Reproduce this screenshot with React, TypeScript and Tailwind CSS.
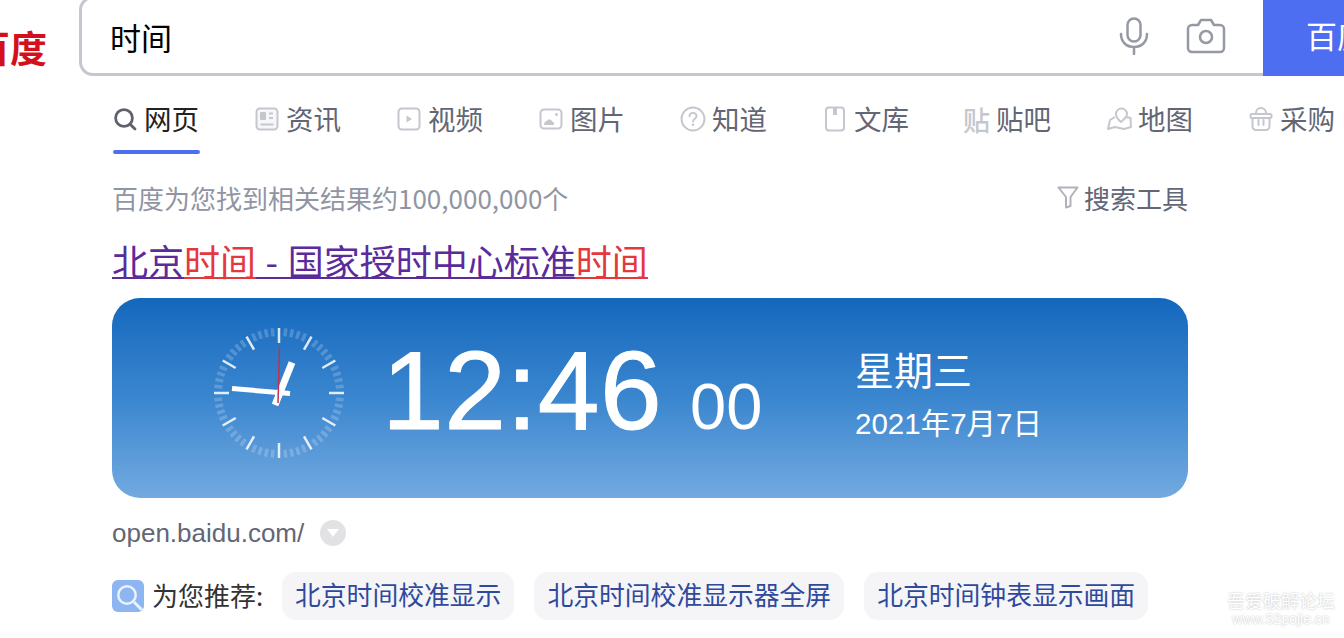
const cjk = "font-['Noto_Sans_CJK_SC','Noto_Sans',sans-serif]";

function IconSearch() {
  return (
    <svg width="24" height="24" viewBox="0 0 24 24" fill="none" stroke="#5f626d" strokeWidth="2.8" strokeLinecap="round">
      <circle cx="11" cy="11" r="8.4" />
      <path d="M17.4 17.4 22 22" />
    </svg>
  );
}

function IconNews() {
  return (
    <svg width="24" height="24" viewBox="0 0 24 24" fill="none" stroke="#c4c7ce" strokeWidth="2">
      <rect x="1.500" y="1.500" width="21" height="21" rx="3.500" fill="#f7f7f9" />
      <rect x="5" y="5" width="6" height="8" rx="1" fill="#c4c7ce" stroke="none" />
      <path d="M14 6.500h4M14 11h4M5.500 17.500h13" />
    </svg>
  );
}

function IconVideo() {
  return (
    <svg width="24" height="24" viewBox="0 0 24 24" fill="none" stroke="#c4c7ce" strokeWidth="2">
      <rect x="1.500" y="1.500" width="21" height="21" rx="3.500" />
      <path d="M9.500 8.500v7l5.500-3.500z" fill="#c4c7ce" stroke="none" />
    </svg>
  );
}

function IconImage() {
  return (
    <svg width="24" height="24" viewBox="0 0 24 24" fill="none" stroke="#c4c7ce" strokeWidth="2">
      <rect x="1.500" y="2.500" width="21" height="19" rx="3.500" />
      <path d="M5 18c0-2.500 1.500-4 3-4 .8-2 4.500-2 5 .5 1.600 0 2.500 1.700 2 3.500z" fill="#c4c7ce" stroke="none" />
      <circle cx="17.500" cy="7.500" r="1.500" fill="#c4c7ce" stroke="none" />
    </svg>
  );
}

function IconAsk() {
  return (
    <svg width="26" height="26" viewBox="0 0 24 24" fill="none" stroke="#c4c7ce" strokeWidth="1.800" strokeLinecap="round" className="-ml-[1px]">
      <circle cx="12" cy="12" r="10.600" />
      <path d="M8.800 9.500c0-4.200 6.500-4.200 6.500-.2 0 2.400-3.300 2.500-3.300 4.900" />
      <circle cx="12" cy="17.300" r="1.200" fill="#c4c7ce" stroke="none" />
    </svg>
  );
}

function IconDoc() {
  return (
    <svg width="24" height="26" viewBox="0 0 24 26" fill="none" stroke="#c4c7ce" strokeWidth="2">
      <rect x="3" y="1.500" width="18" height="23" rx="3" />
      <path d="M10 2v7h4V2z" fill="#c4c7ce" stroke="none" />
    </svg>
  );
}

function IconMap() {
  return (
    <svg width="26" height="24" viewBox="0 0 26 24" fill="none" stroke="#c4c7ce" strokeWidth="2" strokeLinejoin="round">
      <path d="M8 10 3 13l-2 9 7-2 9 2 7-2-.5-9-4.500-1" />
      <path d="M14 15c-3-2.500-5-5-5-8a5.500 5.500 0 0 1 11 0c0 3-3 5.500-6 8z" fill="#fff" />
    </svg>
  );
}

function IconBag() {
  return (
    <svg width="24" height="26" viewBox="0 0 24 26" fill="none" stroke="#c4c7ce" strokeWidth="2" strokeLinecap="round">
      <path d="M7 8V7a5 5 0 0 1 10 0v1" />
      <rect x="1.500" y="8" width="21" height="4" rx="1.500" />
      <path d="M3.500 12v8.500a3.500 3.500 0 0 0 3.500 3.500h10a3.500 3.500 0 0 0 3.500-3.500V12M9.500 14v5M14.500 14v5" />
    </svg>
  );
}

const tabs = [
  { label: "网页", icon: <IconSearch /> },
  { label: "资讯", icon: <IconNews /> },
  { label: "视频", icon: <IconVideo /> },
  { label: "图片", icon: <IconImage /> },
  { label: "知道", icon: <IconAsk /> },
  { label: "文库", icon: <IconDoc /> },
  { label: "贴吧", icon: <span className="-ml-[2px] text-[27px] leading-none font-medium text-[#c4c7ce]">贴</span> },
  { label: "地图", icon: <IconMap /> },
  { label: "采购", icon: <IconBag /> },
];

const ticks = Array.from({ length: 60 }, (_, i) => i);

function Clock() {
  return (
    <svg width="132" height="132" viewBox="0 0 132 132" className="mb-[10px] shrink-0">
      {ticks.map((i) => {
        const major = i % 5 === 0;
        return (
          <line
            key={i}
            x1="66"
            y1="1"
            x2="66"
            y2={major ? 16 : 9}
            stroke="#fff"
            strokeOpacity={major ? 0.85 : 0.2}
            strokeWidth={major ? 2.500 : 3.500}
            transform={`rotate(${i * 6} 66 66)`}
          />
        );
      })}
      <path d="M19 61.500 L77 66.500" stroke="#fff" strokeWidth="5" />
      <path d="M79 35.500 L62 78" stroke="#fff" strokeWidth="7" />
      <path d="M66.500 20 L65 76" stroke="#c2314a" strokeWidth="1.500" />
    </svg>
  );
}

export default function App() {
  return (
    <div className={`relative h-[638px] w-[1344px] overflow-hidden bg-white ${cjk}`}>
      {/* Header */}
      <div className="flex h-[76px] items-end">
        <div className="flex h-[76px] w-[47px] shrink-0 justify-end overflow-hidden">
          <span className="mt-[21px] whitespace-nowrap text-[37px] leading-[52px] font-bold text-[#d2111d]">百度</span>
        </div>
        <div className="ml-[32px] flex h-[80px] w-[1184px] shrink-0 items-center rounded-l-[14px] border-y-[3px] border-l-[3px] border-[#c4c7ce] pl-[28px]">
          <span className="text-[31px] leading-none text-black">时间</span>
          <div className="ml-auto mr-[37px] flex items-center gap-[37px]">
            <svg width="30" height="38" viewBox="0 0 30 38" fill="none" stroke="#9599a3" strokeWidth="2.500" strokeLinecap="round">
              <rect x="8.500" y="1.500" width="13" height="23" rx="6.500" />
              <path d="M2 17c0 8 5.500 13 13 13s13-5 13-13M15 30v7" />
            </svg>
            <svg width="40" height="36" viewBox="0 0 40 36" fill="none" stroke="#9599a3" strokeWidth="2.500" strokeLinejoin="round">
              <path d="M12 7l3-5h10l3 5h6a4 4 0 0 1 4 4v19a4 4 0 0 1-4 4H6a4 4 0 0 1-4-4V11a4 4 0 0 1 4-4z" />
              <circle cx="20" cy="19" r="6" />
            </svg>
          </div>
        </div>
        <div className="h-[76px] w-[81px] shrink-0 overflow-hidden bg-[#4e6ef2] pl-[43px] pt-[15px] text-[31px] leading-[40px] whitespace-nowrap text-white">
          百度一下
        </div>
      </div>

      {/* Tabs */}
      <div className="ml-[113px] mt-[27px] flex gap-[55px]">
        {tabs.map((t, i) => (
          <div key={t.label} className="flex w-[87px] shrink-0 flex-col">
            <div className={`flex h-[32px] items-center justify-between pr-[1px] text-[27.500px] leading-none ${i === 0 ? "text-[#222222]" : "text-[#626675]"}`}>
              <span className="flex w-[26px] justify-start">{t.icon}</span>
              <span className="whitespace-nowrap">{t.label}</span>
            </div>
            {i === 0 && <div className="mt-[15px] h-[4px] rounded-full bg-[#4e6ef2]" />}
          </div>
        ))}
      </div>

      {/* Result */}
      <div className="ml-[112px] w-[1076px]">
        <div className="mt-[25px] flex h-[36px] items-center justify-between text-[26px] text-[#9195a3]">
          <span>百度为您找到相关结果约100,000,000个</span>
          <span className="flex items-center gap-[5px] text-[#626675]">
            <svg width="22" height="24" viewBox="0 0 22 24" fill="none" stroke="#b0b3bb" strokeWidth="2" strokeLinejoin="round">
              <path d="M1.500 2.500h19L13.500 12v9l-4.500 1.500V12z" />
            </svg>
            搜索工具
          </span>
        </div>

        <h3 className="mt-[23px] text-[36px] leading-[44px] font-normal [word-spacing:1.500px] text-[#5b2b9c] underline underline-offset-[1px] decoration-[2px]">
          北京<em className="not-italic text-[#e5383c] underline underline-offset-[1px] decoration-[2px]">时间</em> - 国家授时中心标准<em className="not-italic text-[#e5383c] underline underline-offset-[1px] decoration-[2px]">时间</em>
        </h3>

        {/* Clock card */}
        <div className="mt-[16px] flex h-[200px] items-center rounded-[28px] bg-gradient-to-b from-[#1268bd] via-[#3a86cf] to-[#72aae0] pl-[101px] text-white">
          <Clock />
          <div className="mb-[14px] ml-[37px] flex w-[387px] shrink-0 items-baseline font-['Liberation_Sans',sans-serif] leading-none">
            <span className="w-[308px] shrink-0 text-[111px] tracking-[0.5px] [-webkit-text-stroke:1px_white]">12:46</span>
            <span className="text-[65px]">00</span>
          </div>
          <div className="mb-[9px] ml-[86px] flex flex-col">
            <span className="text-[39px] leading-[48px]">星期三</span>
            <span className="mt-[13px] font-['Liberation_Sans','Noto_Sans_CJK_SC',sans-serif] text-[29.500px] leading-[38px]">2021年7月7日</span>
          </div>
        </div>

        {/* Source */}
        <div className="mt-[17px] flex h-[36px] items-center gap-[16px] font-['Liberation_Sans',sans-serif] text-[26px] text-[#626675]">
          open.baidu.com/
          <span className="flex h-[26px] w-[26px] items-center justify-center rounded-full bg-[#e2e2e4]">
            <svg width="14" height="10" viewBox="0 0 14 10"><path d="M1 1h12L7 9z" fill="#fff" /></svg>
          </span>
        </div>

        {/* Recommendations */}
        <div className="mt-[21px] flex items-center">
          <svg width="32" height="32" viewBox="0 0 32 32" className="shrink-0">
            <rect width="32" height="32" rx="6" fill="#8cb5f2" />
            <circle cx="15" cy="15" r="10" fill="#eaf2fd" />
            <circle cx="15" cy="15" r="7.500" fill="#8cb5f2" />
            <path d="M22 22l8 8" stroke="#eaf2fd" strokeWidth="3" />
          </svg>
          <span className="mb-[3px] ml-[8px] w-[130px] text-[26px] leading-[32px] text-[#333333]">为您推荐:</span>
          <div className="flex gap-[20px]">
            {["北京时间校准显示", "北京时间校准显示器全屏", "北京时间钟表显示画面"].map((s) => (
              <span key={s} className="flex h-[48px] items-center rounded-[14px] bg-[#f5f5f8] px-[13px] pb-[3px] text-[25.800px] text-[#2f4a9c]">
                {s}
              </span>
            ))}
          </div>
        </div>
      </div>

      {/* Watermark */}
      <div className="absolute left-[1225px] top-[588px] flex w-[112px] flex-col text-center text-white [text-shadow:0_0_2px_#b5b5b5]">
        <span className="text-[18px] leading-[24px]">吾爱破解论坛</span>
        <span className="font-['Liberation_Sans',sans-serif] text-[14px] leading-[14px]">www.52pojie.cn</span>
      </div>
    </div>
  );
}
